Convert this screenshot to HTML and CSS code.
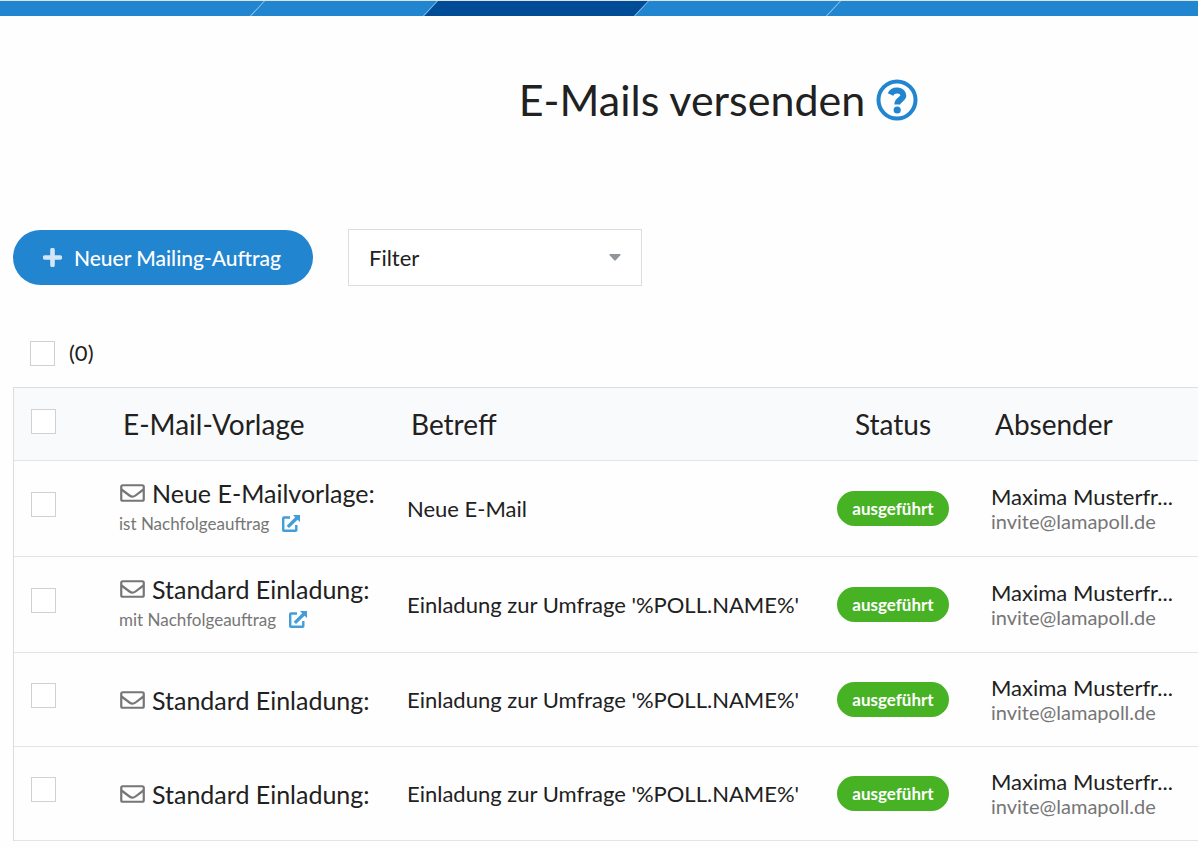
FILE: index.html
```html
<!DOCTYPE html>
<html lang="de">
  <head>
    <meta charset="UTF-8" />
    <title>E-Mails versenden</title>
    <link rel="stylesheet" href="styles.css">
  </head>

  <body>
    <!-- icons -->
    <svg class="sprite" width="0" height="0">
      <symbol id="mail" viewBox="0 0 25 18">
        <rect x="1.250" y="1.250" width="22.500" height="15.500" rx="1.500" fill="none" stroke="currentColor" stroke-width="2.200" />
        <path d="M1.500 5.500L9.500 11.500Q12.500 13.800 15.500 11.500L23.500 5.500" fill="none" stroke="currentColor" stroke-width="2.200" />
      </symbol>
      <symbol id="external" viewBox="0 0 18 17">
        <path d="M8 2.500H2Q1.200 2.500 1.200 3.300V14.900Q1.200 15.700 2 15.700H13.500Q14.300 15.700 14.300 14.900V10" fill="none" stroke="currentColor" stroke-width="2.400" />
        <path d="M11 0H18V7L15.600 4.700L7 13L4.700 10.700L13.200 2.300Z" fill="currentColor" />
      </symbol>
    </svg>

    <ul class="steps">
      <li class="step step-first"></li>
      <li class="step step-second"></li>
      <li class="step step-third current"></li>
      <li class="step step-fourth"></li>
      <li class="step step-last"></li>
    </ul>

    <header class="title">
      <h1>E-Mails versenden</h1>
      <a class="help" href="#">
        <svg width="42" height="42" viewBox="0 0 42 42">
          <circle cx="21" cy="21" r="18.500" fill="none" stroke="currentColor" stroke-width="4" />
          <path d="M14.500 15.500C17 9.800 27.300 10.500 27.300 16.500C27.300 20.500 21.300 20.600 21.300 25.500" fill="none" stroke="currentColor" stroke-width="6" />
          <circle cx="21.200" cy="31" r="3.600" fill="currentColor" />
        </svg>
      </a>
    </header>

    <main class="content">
      <div class="toolbar">
        <button class="new" type="button">
          <svg width="19" height="19" viewBox="0 0 19 19">
            <path d="M9.500 2V17M2 9.500H17" fill="none" stroke="currentColor" stroke-width="4.600" stroke-linecap="round" />
          </svg>
          Neuer Mailing-Auftrag
        </button>
        <div class="filter">
          <select aria-label="Filter">
            <option>Filter</option>
          </select>
          <svg class="caret" width="12" height="7" viewBox="0 0 12 7">
            <path d="M1 0H11Q12 0.300 11.300 1.200L6.800 6.300Q6 7 5.200 6.300L0.700 1.200Q0 0.300 1 0Z" fill="currentColor" />
          </svg>
        </div>
      </div>

      <label class="selected"><input type="checkbox" />(0)</label>

      <table class="mailings">
        <colgroup>
          <col class="col-check">
          <col class="col-template">
          <col class="col-subject">
          <col class="col-status">
          <col>
        </colgroup>
        <thead>
          <tr>
            <th><input type="checkbox" aria-label="Alle" /></th>
            <th>E-Mail-Vorlage</th>
            <th>Betreff</th>
            <th class="status">Status</th>
            <th>Absender</th>
          </tr>
        </thead>
        <tbody>
          <tr class="linked">
            <td><input type="checkbox" aria-label="Neue E-Mailvorlage" /></td>
            <td>
              <div class="name"><svg width="25" height="18"><use href="#mail" /></svg>Neue E-Mailvorlage:</div>
              <div class="follow">ist Nachfolgeauftrag <a href="#"><svg width="18" height="17"><use href="#external" /></svg></a></div>
            </td>
            <td>Neue E-Mail</td>
            <td class="status"><span class="badge">ausgeführt</span></td>
            <td class="sender">Maxima Musterfr...<div class="address">invite@lamapoll.de</div></td>
          </tr>
          <tr class="linked">
            <td><input type="checkbox" aria-label="Standard Einladung" /></td>
            <td>
              <div class="name"><svg width="25" height="18"><use href="#mail" /></svg>Standard Einladung:</div>
              <div class="follow">mit Nachfolgeauftrag <a href="#"><svg width="18" height="17"><use href="#external" /></svg></a></div>
            </td>
            <td>Einladung zur Umfrage '%POLL.NAME%'</td>
            <td class="status"><span class="badge">ausgeführt</span></td>
            <td class="sender">Maxima Musterfr...<div class="address">invite@lamapoll.de</div></td>
          </tr>
          <tr>
            <td><input type="checkbox" aria-label="Standard Einladung" /></td>
            <td>
              <div class="name"><svg width="25" height="18"><use href="#mail" /></svg>Standard Einladung:</div>
            </td>
            <td>Einladung zur Umfrage '%POLL.NAME%'</td>
            <td class="status"><span class="badge">ausgeführt</span></td>
            <td class="sender">Maxima Musterfr...<div class="address">invite@lamapoll.de</div></td>
          </tr>
          <tr>
            <td><input type="checkbox" aria-label="Standard Einladung" /></td>
            <td>
              <div class="name"><svg width="25" height="18"><use href="#mail" /></svg>Standard Einladung:</div>
            </td>
            <td>Einladung zur Umfrage '%POLL.NAME%'</td>
            <td class="status"><span class="badge">ausgeführt</span></td>
            <td class="sender">Maxima Musterfr...<div class="address">invite@lamapoll.de</div></td>
          </tr>
        </tbody>
      </table>
    </main>
  </body>
</html>
```
FILE: styles.css
```css
* {
  box-sizing: border-box;
  margin: 0;
  padding: 0;
}

body {
  background: #fefefe;
  color: #212121;
  font-family: Lato, "Liberation Sans", sans-serif;
  font-size: 22px;
  line-height: 28px;
}

.sprite {
  position: absolute;
}

/* progress bar */
.steps {
  display: flex;
  height: 16px;
  border-top: 1px solid #dde3e6;
  overflow: hidden;
  list-style: none;
}

.step {
  background: #2185d0;
  border-right: 1px solid #a5d8f3;
  transform: skewX(-43deg);
}

.step.current {
  background: #004c97;
}

.step-first {
  width: 278px;
  margin-left: -20px;
}

.step-second {
  width: 173px;
}

.step-third {
  width: 211px;
}

.step-fourth {
  width: 192px;
}

.step-last {
  flex: 1;
  margin-right: -20px;
}

.title {
  display: flex;
  align-items: center;
  justify-content: center;
  gap: 11px;
  padding: 55px 0 81px 239px;
}

.title h1 {
  font-size: 43px;
  font-weight: normal;
  line-height: 58px;
}

.help {
  display: flex;
  color: #2185d0;
}

.content {
  padding-left: 13px;
}

.toolbar {
  display: flex;
  align-items: center;
  gap: 35px;
  padding-top: 19px;
}

.new {
  display: flex;
  align-items: center;
  justify-content: center;
  gap: 12px;
  width: 300px;
  height: 55px;
  padding-right: 2px;
  border: 0;
  border-radius: 28px;
  background: #2185d0;
  color: #fff;
  font: 500 21px Lato, sans-serif;
  cursor: pointer;
}

.new svg {
  opacity: 0.8;
}

.filter {
  position: relative;
  width: 294px;
}

.filter select {
  width: 100%;
  height: 57px;
  padding: 0 20px;
  border: 1px solid #dcdddd;
  border-radius: 0;
  background: #fff;
  color: #212121;
  font: 22px Lato, sans-serif;
  appearance: none;
}

.caret {
  position: absolute;
  top: 25px;
  right: 21px;
  color: #8f979d;
  pointer-events: none;
}

input {
  display: block;
  width: 25px;
  height: 25px;
  border: 1px solid #d0d1d2;
  background: #fff;
  appearance: none;
}

.selected {
  display: flex;
  align-items: center;
  gap: 14px;
  width: max-content;
  padding: 53px 0 20px 17px;
}

/* list of mailings */
.mailings {
  width: 100%;
  border-left: 1px solid #dcddde;
  border-top: 1px solid #dcddde;
  border-spacing: 0;
  table-layout: fixed;
}

.col-check {
  width: 89px;
}

.col-template {
  width: 288px;
}

.col-subject {
  width: 420px;
}

.col-status {
  width: 164px;
}

th,
td {
  height: 94px;
  padding: 0 0 0 16px;
  border-bottom: 1px solid #e3e4e5;
  text-align: left;
  vertical-align: middle;
  white-space: nowrap;
}

th {
  height: 73px;
  padding-left: 20px;
  background: #f9fafb;
  font-size: 28px;
  font-weight: normal;
}

.linked td {
  height: 96px;
}

th:first-child {
  padding: 0 0 5px 17px;
}

td:first-child {
  padding: 0 0 8px 17px;
}

.status {
  padding: 0;
  text-align: center;
}

.name {
  display: flex;
  align-items: center;
  gap: 7px;
  padding-left: 1px;
  font-size: 25px;
  line-height: 30px;
}

.name svg {
  color: #767676;
}

.follow {
  display: flex;
  align-items: center;
  gap: 13px;
  color: #767676;
  font-size: 17px;
  line-height: 32px;
}

.follow a {
  display: flex;
  color: #429dd9;
}

.badge {
  display: inline-block;
  padding: 0 15px;
  border-radius: 18px;
  background: #48b225;
  color: #fff;
  font-size: 17px;
  font-weight: bold;
  line-height: 35px;
}

.sender {
  line-height: 24px;
}

.address {
  color: #767676;
  font-size: 20px;
}
```
